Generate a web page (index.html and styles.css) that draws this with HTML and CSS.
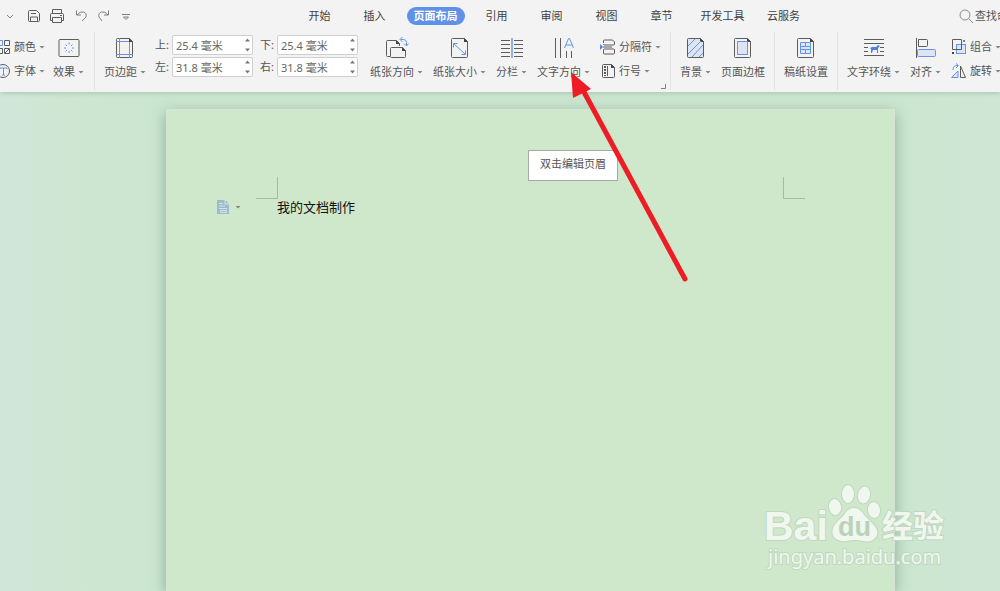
FILE: index.html
```html
<!DOCTYPE html>
<html lang="zh-CN">
<head>
<meta charset="utf-8">
<title>文档</title>
<link rel="stylesheet" href="styles.css">
</head>
<body>
<div class="app">
<header class="top">
  <div class="titlebar">
    <div class="quick">
      <button class="qbtn" aria-label="菜单"><svg width="8" height="16"><path class="thin" d="M1 7l3 3 3-3"/></svg></button>
      <button class="qbtn save" aria-label="保存"><svg width="14" height="16"><path class="dk" d="M1.500 3.500q0-1 1-1h7l3 3v7q0 1-1 1h-9q-1 0-1-1zM4 5.500h5M3.500 13.500v-4.500h7v4.500"/></svg></button>
      <button class="qbtn print" aria-label="打印"><svg width="16" height="16"><path class="dk" d="M3.500 5.500v-4h9v4M3.500 12.500h-2v-6q0-1 1-1h11q1 0 1 1v6h-2M3.500 9.500h9v5h-9zM11 7.500h2"/></svg></button>
      <button class="qbtn undo" aria-label="撤销"><svg width="12" height="16"><path class="thin" d="M1.500 2.500v4.500h4.500M2 7q3-4 6.500-3t2.500 5l-4 4"/></svg></button>
      <button class="qbtn redo" aria-label="恢复"><svg width="12" height="16"><path class="thin" d="M10.500 2.500v4.500h-4.500M10 7q-3-4-6.500-3t-2.500 5l3 4"/></svg></button>
      <button class="qbtn more" aria-label="更多"><svg width="8" height="16"><path class="thin" d="M0 6.500h8M1.500 9h5L4 11.500z"/></svg></button>
    </div>
    <nav class="tabs">
      <button class="tab"><span>开始</span></button>
      <button class="tab"><span>插入</span></button>
      <button class="tab wide active"><span>页面布局</span></button>
      <button class="tab"><span>引用</span></button>
      <button class="tab"><span>审阅</span></button>
      <button class="tab"><span>视图</span></button>
      <button class="tab"><span>章节</span></button>
      <button class="tab wide"><span>开发工具</span></button>
      <button class="tab"><span>云服务</span></button>
    </nav>
    <button class="search"><svg width="15" height="16"><circle cx="6" cy="7" r="5"/><path d="M9.500 10.500l4.500 4.500"/></svg>查找命令</button>
  </div>

  <div class="ribbon">
    <div class="stack theme">
      <button class="small"><svg width="16" height="16"><path class="bl" d="M1.500 1.500h6v5h-6z"/><path class="dk" d="M9.500 1.500h5v5h-5zM1.500 9.500h6v5h-6zM9.500 9.500h5v5h-5zM10 14l4-4"/></svg><span>颜色</span><i class="caret"></i></button>
      <button class="small"><svg width="16" height="16"><circle class="dk" cx="8" cy="8" r="6.500"/><path class="bl" d="M5 6V5h7v1M8.500 5v7M7 12h3"/></svg><span>字体</span><i class="caret"></i></button>
    </div>
    <button class="big effect"><svg width="22" height="24"><rect class="dk" x="1" y="3.500" width="20" height="17" rx="1"/><path class="bl" d="M11 6.500v2M11 15v2M6 12h2M14 12h2M7.500 8.500l1.500 1.500M13 14l1.500 1.500M14.500 8.500L13 10M9 14l-1.500 1.500"/></svg><span>效果<i class="caret"></i></span></button>
    <div class="sep first"></div>
    <button class="big"><svg width="18" height="24"><path class="dk" d="M.5 3.500q0-1 1-1h12l3 3v15q0 1-1 1h-14q-1 0-1-1z"/><path class="dkf" d="M13 2v4h4z"/><path class="bl" d="M3.500 2v20M13.500 6v16M0 5.500h13M0 18.500h17"/></svg><span>页边距<i class="caret"></i></span></button>
    <div class="margins">
      <label for="mt">上:</label>
      <div class="spin"><input id="mt" type="text" value="25.4 毫米"><svg width="7" height="16"><path d="M1 4.500l2.500-3 2.500 3zM1 11.500h5l-2.500 3z"/></svg></div>
      <label for="mb">下:</label>
      <div class="spin"><input id="mb" type="text" value="25.4 毫米"><svg width="7" height="16"><path d="M1 4.500l2.500-3 2.500 3zM1 11.500h5l-2.500 3z"/></svg></div>
      <label for="ml">左:</label>
      <div class="spin"><input id="ml" type="text" value="31.8 毫米"><svg width="7" height="16"><path d="M1 4.500l2.500-3 2.500 3zM1 11.500h5l-2.500 3z"/></svg></div>
      <label for="mr">右:</label>
      <div class="spin"><input id="mr" type="text" value="31.8 毫米"><svg width="7" height="16"><path d="M1 4.500l2.500-3 2.500 3zM1 11.500h5l-2.500 3z"/></svg></div>
    </div>
    <div class="row">
      <button class="big"><svg width="24" height="24"><path class="dk" d="M5 20.500H2.500q-1 0-1-1v-14q0-1 1-1h9l3 3v2.500"/><path class="dkf" d="M11 4v4h4z"/><path class="dk wf" d="M5.500 12.500q0-1 1-1h11l3 3v6q0 1-1 1h-13q-1 0-1-1z"/><path class="dkf" d="M17 11v4h4z"/><path class="bl" d="M15.500 3.500h3q3 0 3 3v3M17.500 1l-2.500 2.500 2.500 2.500M19 7.500l2.500 2.500 2-2.500"/></svg><span>纸张方向<i class="caret"></i></span></button>
      <button class="big"><svg width="18" height="24"><path class="dk" d="M.5 3.500q0-1 1-1h12l3 3v15q0 1-1 1h-14q-1 0-1-1z"/><path class="dkf" d="M13 2v4h4z"/><path class="bl" d="M2.500 7.500l12 11M2.500 11.500v-4h4M14.500 14.500v4h-4"/></svg><span>纸张大小<i class="caret"></i></span></button>
      <button class="big"><svg width="22" height="24"><path class="dk" d="M0 4.500h9M0 8.500h9M0 12.500h9M0 16.500h9M0 20.500h9M13 4.500h9M13 8.500h9M13 12.500h9M13 16.500h9M13 20.500h9"/><path class="pale" d="M11 2v20"/></svg><span>分栏<i class="caret"></i></span></button>
      <button class="big"><svg width="20" height="24"><path class="dk" d="M1.500 2v20M6.500 2v20M12.500 15v7M17.500 15v7"/><path class="bl" d="M10.500 12L14.500 2.500h1L19.500 12M12 9h6"/></svg><span>文字方向<i class="caret"></i></span></button>
    </div>
    <div class="stack breaks">
      <button class="small"><svg width="16" height="16"><path class="dk" d="M3.500 4v-2q0-1 1-1h8l2 2v2q0 1-1 1h-9q-1 0-1-1M3.500 14q0 1 1 1h9q1 0 1-1v-3q0-1-1-1h-9q-1 0-1 1zM3 8h9"/><path class="blf" d="M0 5l3 3-3 3z"/></svg><span>分隔符</span><i class="caret"></i></button>
      <button class="small"><svg width="16" height="16"><path class="dk" d="M2.500 2.500q0-1 1-1h8l3 3v9q0 1-1 1h-10q-1 0-1-1zM7.500 3v10"/><path class="dkf" d="M11 1v4h4z"/><path class="dk dash" d="M5 3v10"/></svg><span>行号</span><i class="caret"></i></button>
    </div>
    <button class="launch" aria-label="页面设置"><svg width="5" height="5"><path class="thin" d="M4.500 0v4.500H0"/></svg></button>
    <div class="sep flush"></div>
    <div class="row">
      <button class="big"><svg width="18" height="24"><path class="dk bf" d="M.5 3.500q0-1 1-1h12l3 3v15q0 1-1 1h-14q-1 0-1-1z"/><path class="dkf" d="M13 2v4h4z"/><path class="bl" d="M1 10l7-7M1 18L14 5M5 21L16 9M12 21l4-4"/></svg><span>背景<i class="caret"></i></span></button>
      <button class="big"><svg width="18" height="24"><path class="dk" d="M.5 3.500q0-1 1-1h12l3 3v15q0 1-1 1h-14q-1 0-1-1z"/><path class="dkf" d="M13 2v4h4z"/><rect class="bl bf" x="3.500" y="5.500" width="10" height="13"/></svg><span>页面边框</span></button>
    </div>
    <div class="sep"></div>
    <button class="big"><svg width="18" height="24"><path class="dk" d="M.5 3.500q0-1 1-1h12l3 3v15q0 1-1 1h-14q-1 0-1-1z"/><path class="dkf" d="M13 2v4h4z"/><path class="bl bf" d="M3.500 6.500h10v11h-10zM3.500 10.500h10M3.500 13.500h10M8.500 6.500v4M8.500 13.500v4"/></svg><span>稿纸设置</span></button>
    <div class="sep"></div>
    <div class="row">
      <button class="big"><svg width="20" height="24"><path class="dk" d="M0 3.500h20M0 7.500h20M0 11.500h4M16 11.500h4M0 15.500h4M16 15.500h4M0 19.500h20"/><path class="blf" d="M6 12l2-1h4l2-2 2 1-2 2v5h-1v-3H9l-1 3H7v-4z"/></svg><span>文字环绕<i class="caret"></i></span></button>
      <button class="big"><svg width="22" height="24"><path class="dk" d="M1.500 2v20M3.500 3.500h8q1 0 1 1v5q0 1-1 1h-8z"/><rect class="bl bf" x="2.500" y="13.500" width="18" height="7" rx="1"/></svg><span>对齐<i class="caret"></i></span></button>
    </div>
    <div class="stack arrange">
      <button class="small"><svg width="16" height="16"><rect class="bl bf" x="5.500" y="5.500" width="9" height="9"/><path class="dk" d="M1.500.5h9v10h-9z"/><path class="blf" d="M12 1h2v2h-2z"/><path class="dkf" d="M1 13h2v2H1z"/></svg><span>组合</span><i class="caret"></i></button>
      <button class="small"><svg width="16" height="16"><path class="dk" d="M9.500 3v11.500h5z"/><path class="bl bf" d="M7 8v6.500H.5z"/><path class="bl" d="M2 7q0-5 5-4.500M5 .5l2.500 2L5 5"/></svg><span>旋转</span><i class="caret"></i></button>
    </div>
  </div>
</header>

<main class="canvas">
  <article class="page">
    <div class="corners"><i class="corner left"></i><i class="corner right"></i></div>
    <div class="line">
      <button class="para" aria-label="段落布局"><svg width="12" height="14"><path d="M0 0h8l4 4v10H0z"/><path class="cut" d="M2 3.500h4M2 6h6M2 8.500h8M3.500 10.500h6v2h-6zM8 0v4h4"/></svg><i class="caret"></i></button>
      <p>我的文档制作</p>
    </div>
  </article>
  <div class="tip" role="tooltip">双击编辑页眉</div>
  <svg class="mark" width="190" height="100" viewBox="0 0 190 100">
    <g class="ink">
      <text class="latin" x="2" y="58">Bai</text>
      <ellipse cx="73" cy="25" rx="6" ry="8" transform="rotate(-8 73 25)"/>
      <ellipse cx="86" cy="12" rx="6" ry="9"/>
      <ellipse cx="102" cy="13" rx="6" ry="8.500" transform="rotate(12 102 13)"/>
      <ellipse cx="112" cy="28" rx="6" ry="8" transform="rotate(-8 112 28)"/>
      <path d="M92 26q6 0 10 7l8 8q9 9 3 15-4 5-12 3-8-2-16 0-9 1-13-4-4-7 2-14l8-8q4-7 10-7z"/>
      <text class="han" x="120" y="55">经验</text>
      <text class="url" x="6" y="82">jingyan.baidu.com</text>
    </g>
    <text class="du" x="76" y="54">du</text>
  </svg>
</main>
<svg class="arrow" width="118" height="212" viewBox="0 0 118 212"><path class="shaft" d="M14 20l101 187"/><path class="head" d="M1 0l20 17-18 9z"/></svg>
</div>
</body>
</html>
```
FILE: styles.css
```css
* { box-sizing: border-box; }
body {
  margin: 0;
  font-family: "Noto Sans", "Noto Sans CJK SC", sans-serif;
  font-size: 11px;
  line-height: 16px;
  color: #555;
}
button, input { font: inherit; color: inherit; border: 0; padding: 0; background: none; }
svg { display: block; flex: none; }
.app { position: relative; min-height: 100vh; display: flex; flex-direction: column; overflow: hidden; }
.top { position: relative; z-index: 1; background: #f3f3f3; box-shadow: 0 1px 5px #a8c4ad; }

.titlebar { display: flex; align-items: center; height: 32px; overflow: hidden; }
.quick { display: flex; width: 292px; flex: none; padding-left: 6px; }
.qbtn { margin-top: -1px; }
.save { margin-left: 13px; }
.print { margin-left: 8px; }
.undo { margin-left: 10px; }
.redo { margin-left: 11px; }
.more { margin-left: 12px; }
.tabs { display: flex; flex: none; }
.tab { min-width: 55px; display: flex; justify-content: center; white-space: nowrap; color: #404040; }
.wide { min-width: 67px; }
.tab span { padding: 1px 7px; border-radius: 9px; }
.active span { background: #5f91e8; color: #fff; font-weight: bold; }
.search { display: flex; gap: 1px; margin-left: 148px; white-space: nowrap; flex: none; }
.search svg { fill: none; stroke: #8c8c8c; }

.ribbon { display: flex; height: 60px; overflow: hidden; }
.ribbon > * { flex: none; }
.row { display: flex; gap: 10px; }
.big { display: flex; flex-direction: column; align-items: center; align-self: flex-start; padding-top: 4px; gap: 4px; white-space: nowrap; }
.big span { display: flex; align-items: center; gap: 3px; }
.effect { margin-left: 8px; }
.stack { display: flex; flex-direction: column; padding-top: 3px; }
.theme { margin-left: -5px; }
.breaks, .arrange { margin-left: 10px; }
.small { display: flex; align-items: center; gap: 3px; height: 24px; white-space: nowrap; }
.caret { width: 6px; height: 3px; background: #858585; clip-path: polygon(0 0, 100% 0, 50% 100%); }
.sep { width: 1px; background: #e2e2e2; margin: 0 9px 2px; }
.first { margin: 0 9px 2px 10px; }
.flush { margin-left: 4px; }
.launch { align-self: flex-end; margin-bottom: 3px; }

.margins {
  display: grid;
  grid-template-columns: 17px 81px 24px 81px;
  row-gap: 2px;
  align-content: start;
  margin: 3px 12px 0 9px;
}
.margins label { line-height: 20px; }
.margins label:nth-of-type(even) { padding-left: 7px; }
.spin { display: flex; align-items: center; height: 20px; padding: 0 1px 0 3px; background: #fff; border: 1px solid #cfcfcf; border-radius: 2px; }
.spin input { flex: 1; min-width: 0; height: 18px; outline: 0; color: #666; }
.spin path { fill: #777; }

.dk { fill: none; stroke: #5c5c5c; }
.dkf { fill: #444; }
.bl { fill: none; stroke: #6595e8; }
.blf { fill: #4a86e0; }
.bf { fill: #dde5f3; }
.wf { fill: #f3f3f3; }
.pale { stroke: #8fb0ea; stroke-width: 2; }
.thin { fill: none; stroke: #808080; }
.dash { stroke-width: 2; stroke-dasharray: 2 1; }

.canvas {
  position: relative;
  flex: 1;
  display: flex;
  padding: 17px 105px 0 166px;
  background: linear-gradient(90deg, #d1e6da, #cee6d2 6%, #cbe6d0 16%, #cbe6d0 90%, #cfe6d5);
  overflow: hidden;
}
.page {
  flex: 1;
  padding-top: 67px;
  background: #cfe8cb;
  border: 1px solid #d6e4d6;
  border-bottom: 0;
  box-shadow: 0 4px 14px #8fac96;
}
.corners { display: flex; justify-content: space-between; padding: 0 89px; }
.corner { width: 22px; height: 22px; border-bottom: 1px solid #a5b9a3; }
.left { border-right: 1px solid #a5b9a3; }
.right { border-left: 1px solid #a5b9a3; }
.line { display: flex; align-items: center; padding-left: 50px; gap: 36px; }
.para { display: flex; align-items: center; gap: 6px; }
.para path { fill: #9dbbd0; }
.para .cut { fill: none; stroke: #d5e7dc; }
.line p { margin: 0; font-size: 13px; line-height: 16px; color: #111; }

.tip {
  position: absolute;
  left: 528px;
  top: 58px;
  padding: 5px 11px 8px;
  background: #fff;
  border: 1px solid #a5aba5;
  white-space: nowrap;
}
.arrow { position: absolute; left: 570px; top: 72px; z-index: 2; pointer-events: none; }
.shaft { stroke: #ee1c25; stroke-width: 5; stroke-linecap: round; }
.head { fill: #ee1c25; }

.mark { position: absolute; right: 48px; bottom: 9px; }
.ink { fill: #f0f7ef; stroke: #bfd8bf; stroke-width: 2; paint-order: stroke; }
.latin { font: bold 41px "Liberation Sans", Arial, sans-serif; }
.han { font: bold 31px "Noto Sans CJK SC", sans-serif; }
.url { font: 20px "Noto Sans", sans-serif; }
.du { font: bold 27px "Liberation Sans", Arial, sans-serif; fill: #bad2ba; }
```
